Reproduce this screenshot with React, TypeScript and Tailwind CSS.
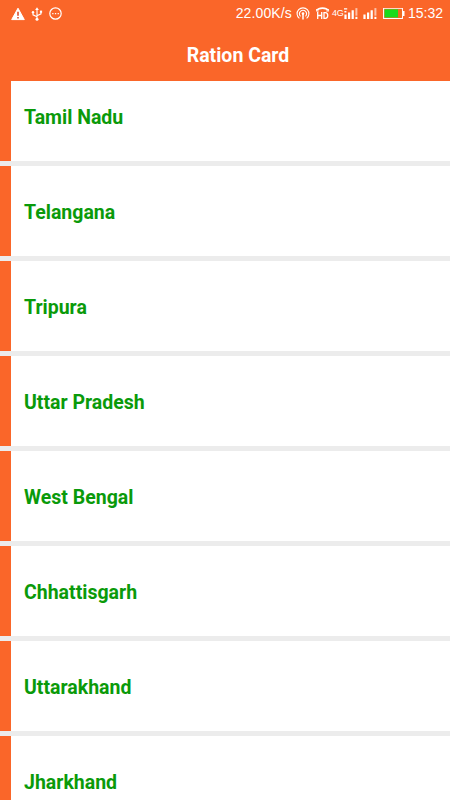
import React from 'react';

const states = [
  'Tamil Nadu',
  'Telangana',
  'Tripura',
  'Uttar Pradesh',
  'West Bengal',
  'Chhattisgarh',
  'Uttarakhand',
  'Jharkhand',
];

const WarningIcon = () => (
  <svg className="w-[14px] h-[14px]" viewBox="0 0 14 14">
    <path d="M7 1.2 13.3 12.6H.7Z" fill="#fff" stroke="#fff" strokeLinejoin="round" />
    <path d="M7 4.8v4M7 10v1.5" stroke="#d9401c" strokeWidth="1.5" />
  </svg>
);

const UsbIcon = () => (
  <svg className="w-[12px] h-[14px]" viewBox="0 0 12 14" fill="none" stroke="#fff" strokeWidth="1.1">
    <path d="M6 2v10M6 9.8 2 7.8V5.5M6 8.8 10 6.8V4.5" />
    <path d="M6 .3 7.9 3H4.1Z" fill="#fff" stroke="none" />
    <circle cx="6" cy="12.2" r="1.5" fill="#fff" stroke="none" />
    <circle cx="2" cy="5.2" r="1.2" fill="#fff" stroke="none" />
    <path d="M8.9 3.6h2.2v2.2H8.9Z" fill="#fff" stroke="none" />
  </svg>
);

const MessageIcon = () => (
  <svg className="w-[13px] h-[13px]" viewBox="0 0 13 13">
    <circle cx="6.5" cy="6.5" r="5.7" fill="none" stroke="#fff" strokeWidth="1.2" />
    <path d="M3.2 6h1.3v1.2H3.2ZM5.9 6h1.3v1.2H5.9ZM8.6 6h1.3v1.2H8.6Z" fill="#fff" />
  </svg>
);

const HotspotIcon = () => (
  <svg className="w-[14px] h-[14px]" viewBox="0 0 14 14" fill="none" stroke="#fff" strokeWidth="1.1">
    <path d="M3.4 11.4a5.9 5.9 0 1 1 7.2 0" />
    <path d="M4.5 9.4a3.6 3.6 0 1 1 5 0" />
    <path d="M7 7v5.5" strokeWidth="1.5" />
    <circle cx="7" cy="6.6" r="1.3" fill="#fff" stroke="none" />
  </svg>
);

const HdIcon = () => (
  <svg className="w-[13px] h-[13px]" viewBox="0 0 13 13" fill="none" stroke="#fff">
    <path d="M1.2 3.2C2.5.4 10.5.4 11.8 3.2" strokeWidth="1.6" />
    <path d="M.7 2v2h2M12.3 2v2h-2" strokeWidth="1.1" />
    <path d="M1.7 5v7M5.7 5v7M1.7 8.5h4M8 5.6h1.2c3.4 0 3.4 5.8 0 5.8H8Z" strokeWidth="1.3" />
  </svg>
);

const SignalIcon = ({ roaming = false }: { roaming?: boolean }) => (
  <svg className="w-[14px] h-[12px]" viewBox="0 0 14 12" fill="#fff">
    {roaming && <path d="M0 .2h3.2v1.2H0ZM.4 3h2v1.6h-2Z" />}
    <path d="M.4 6.5h2.2V11H.4ZM4 4.5h2.2V11H4ZM7.6 2.3h2.2V11H7.6Z" />
    <path d="M11.4.1h2v7.6h-2Z" fillOpacity=".6" />
    <path d="M11.4 8.8h2V11h-2Z" />
  </svg>
);

const BatteryIcon = () => (
  <svg className="w-[22px] h-[12px]" viewBox="0 0 22 12">
    <path d="M.6.3h18.8v10.2H.6Z" fill="none" stroke="#fff" strokeWidth="1.1" />
    <path d="M20 3h1.5v5H20Z" fill="#fff" />
    <path d="M1.5 1.3h13.7v8.2H1.5Z" fill="#18dc1c" />
    <path d="M15.2 1.3H19v8.2h-3.8Z" fill="#ef6a20" />
  </svg>
);

const StatusBar = () => (
  <div className="flex h-[27px] items-center justify-between pl-[11px] pr-[7px] font-['Liberation_Sans',sans-serif] text-[14px] text-white">
    <div className="flex items-center">
      <WarningIcon />
      <div className="ml-[6px] flex"><UsbIcon /></div>
      <div className="ml-[6px] flex"><MessageIcon /></div>
    </div>
    <div className="flex items-center whitespace-nowrap">
      <span className="tracking-[0.12px]">22.00K/s</span>
      <div className="ml-[4px] flex"><HotspotIcon /></div>
      <div className="ml-[6px] flex"><HdIcon /></div>
      <span className="ml-[3px] w-[12px] text-[9px] leading-none tracking-[-0.2px]">4G</span>
      <SignalIcon roaming />
      <div className="ml-[5px] flex"><SignalIcon /></div>
      <div className="ml-[6px] flex"><BatteryIcon /></div>
      <span className="ml-[3px]">15:32</span>
    </div>
  </div>
);

const App: React.FC = () => {
  return (
    <div className="flex h-[800px] w-[450px] flex-col overflow-hidden bg-[#ececec] font-['Roboto',sans-serif]">
      <header className="h-[81px] shrink-0 bg-[#fa6629]">
        <StatusBar />
        <h1 className="pl-[26px] pt-[15px] text-center text-[19.5px] font-bold leading-[28px] text-white">Ration Card</h1>
      </header>
      {/* the list is scrolled a little, so the first row starts under the header */}
      <div className="min-h-0 flex-1 overflow-hidden">
        <ul className="-mt-[10px] flex flex-col gap-[5px]">
          {states.map((state) => (
            <li key={state} className="flex h-[90px] items-center border-l-[11px] border-[#fa6629] bg-white pl-[13px]">
              <span className="pt-1 text-[19.5px] font-bold leading-6 text-[#0a9a0a]">{state}</span>
            </li>
          ))}
        </ul>
      </div>
    </div>
  );
};

export default App;
